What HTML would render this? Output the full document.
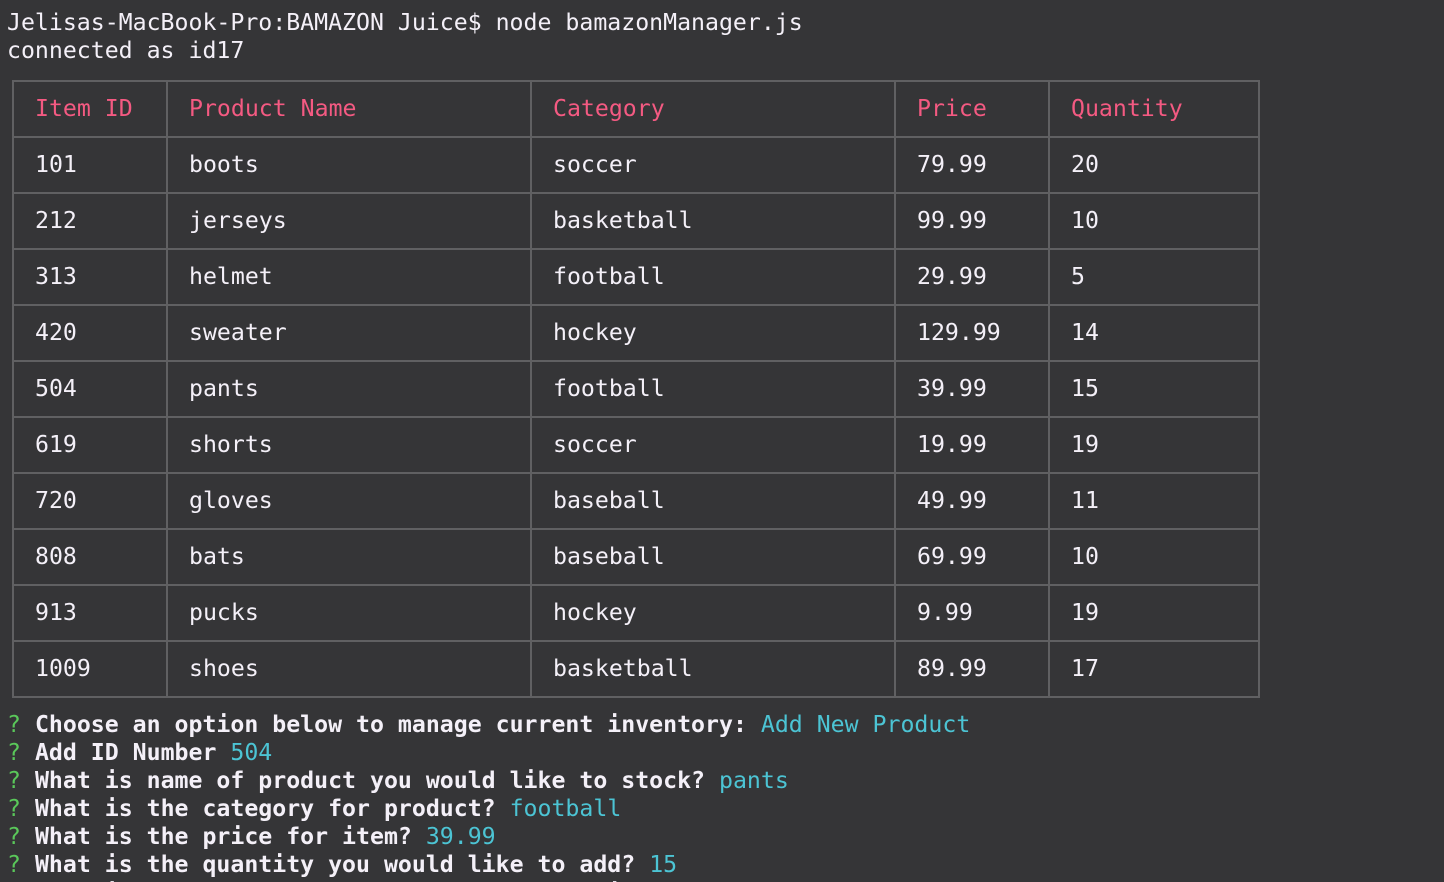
<!DOCTYPE html>
<html><head><meta charset="utf-8"><style>
html,body{margin:0;height:882px;overflow:hidden}
body{background:#353537;width:1444px;position:relative;font-family:"DejaVu Sans Mono","Liberation Mono",monospace;font-size:23.2px;color:#f4f0f8}
.l{position:absolute;left:7px;white-space:pre;line-height:28px}
table{position:absolute;left:12px;top:80px;border-collapse:collapse;table-layout:fixed}
td{border:2px solid #606062;height:52px;padding:0 0 2px 21px;white-space:pre;box-sizing:border-box}
tr{height:56px}
.h td{color:#f45a82}
b{font-weight:bold}
.g{color:#5ac85a}.c{color:#4cc4d4}
</style></head><body>
<div class="l" style="top:9px">Jelisas-MacBook-Pro:BAMAZON Juice$ node bamazonManager.js
connected as id17</div>
<table>
<colgroup><col style="width:154px"><col style="width:364px"><col style="width:364px"><col style="width:154px"><col style="width:210px"></colgroup>
<tr class="h"><td>Item ID</td><td>Product Name</td><td>Category</td><td>Price</td><td>Quantity</td></tr>
<tr><td>101</td><td>boots</td><td>soccer</td><td>79.99</td><td>20</td></tr>
<tr><td>212</td><td>jerseys</td><td>basketball</td><td>99.99</td><td>10</td></tr>
<tr><td>313</td><td>helmet</td><td>football</td><td>29.99</td><td>5</td></tr>
<tr><td>420</td><td>sweater</td><td>hockey</td><td>129.99</td><td>14</td></tr>
<tr><td>504</td><td>pants</td><td>football</td><td>39.99</td><td>15</td></tr>
<tr><td>619</td><td>shorts</td><td>soccer</td><td>19.99</td><td>19</td></tr>
<tr><td>720</td><td>gloves</td><td>baseball</td><td>49.99</td><td>11</td></tr>
<tr><td>808</td><td>bats</td><td>baseball</td><td>69.99</td><td>10</td></tr>
<tr><td>913</td><td>pucks</td><td>hockey</td><td>9.99</td><td>19</td></tr>
<tr><td>1009</td><td>shoes</td><td>basketball</td><td>89.99</td><td>17</td></tr>
</table>
<div class="l" style="top:711px"><span class="g">?</span> <b>Choose an option below to manage current inventory:</b> <span class="c">Add New Product</span>
<span class="g">?</span> <b>Add ID Number</b> <span class="c">504</span>
<span class="g">?</span> <b>What is name of product you would like to stock?</b> <span class="c">pants</span>
<span class="g">?</span> <b>What is the category for product?</b> <span class="c">football</span>
<span class="g">?</span> <b>What is the price for item?</b> <span class="c">39.99</span>
<span class="g">?</span> <b>What is the quantity you would like to add?</b> <span class="c">15</span>
<span class="g">?</span> <b>What is the ID of the product you would like to delete?</b></div>
</body></html>
